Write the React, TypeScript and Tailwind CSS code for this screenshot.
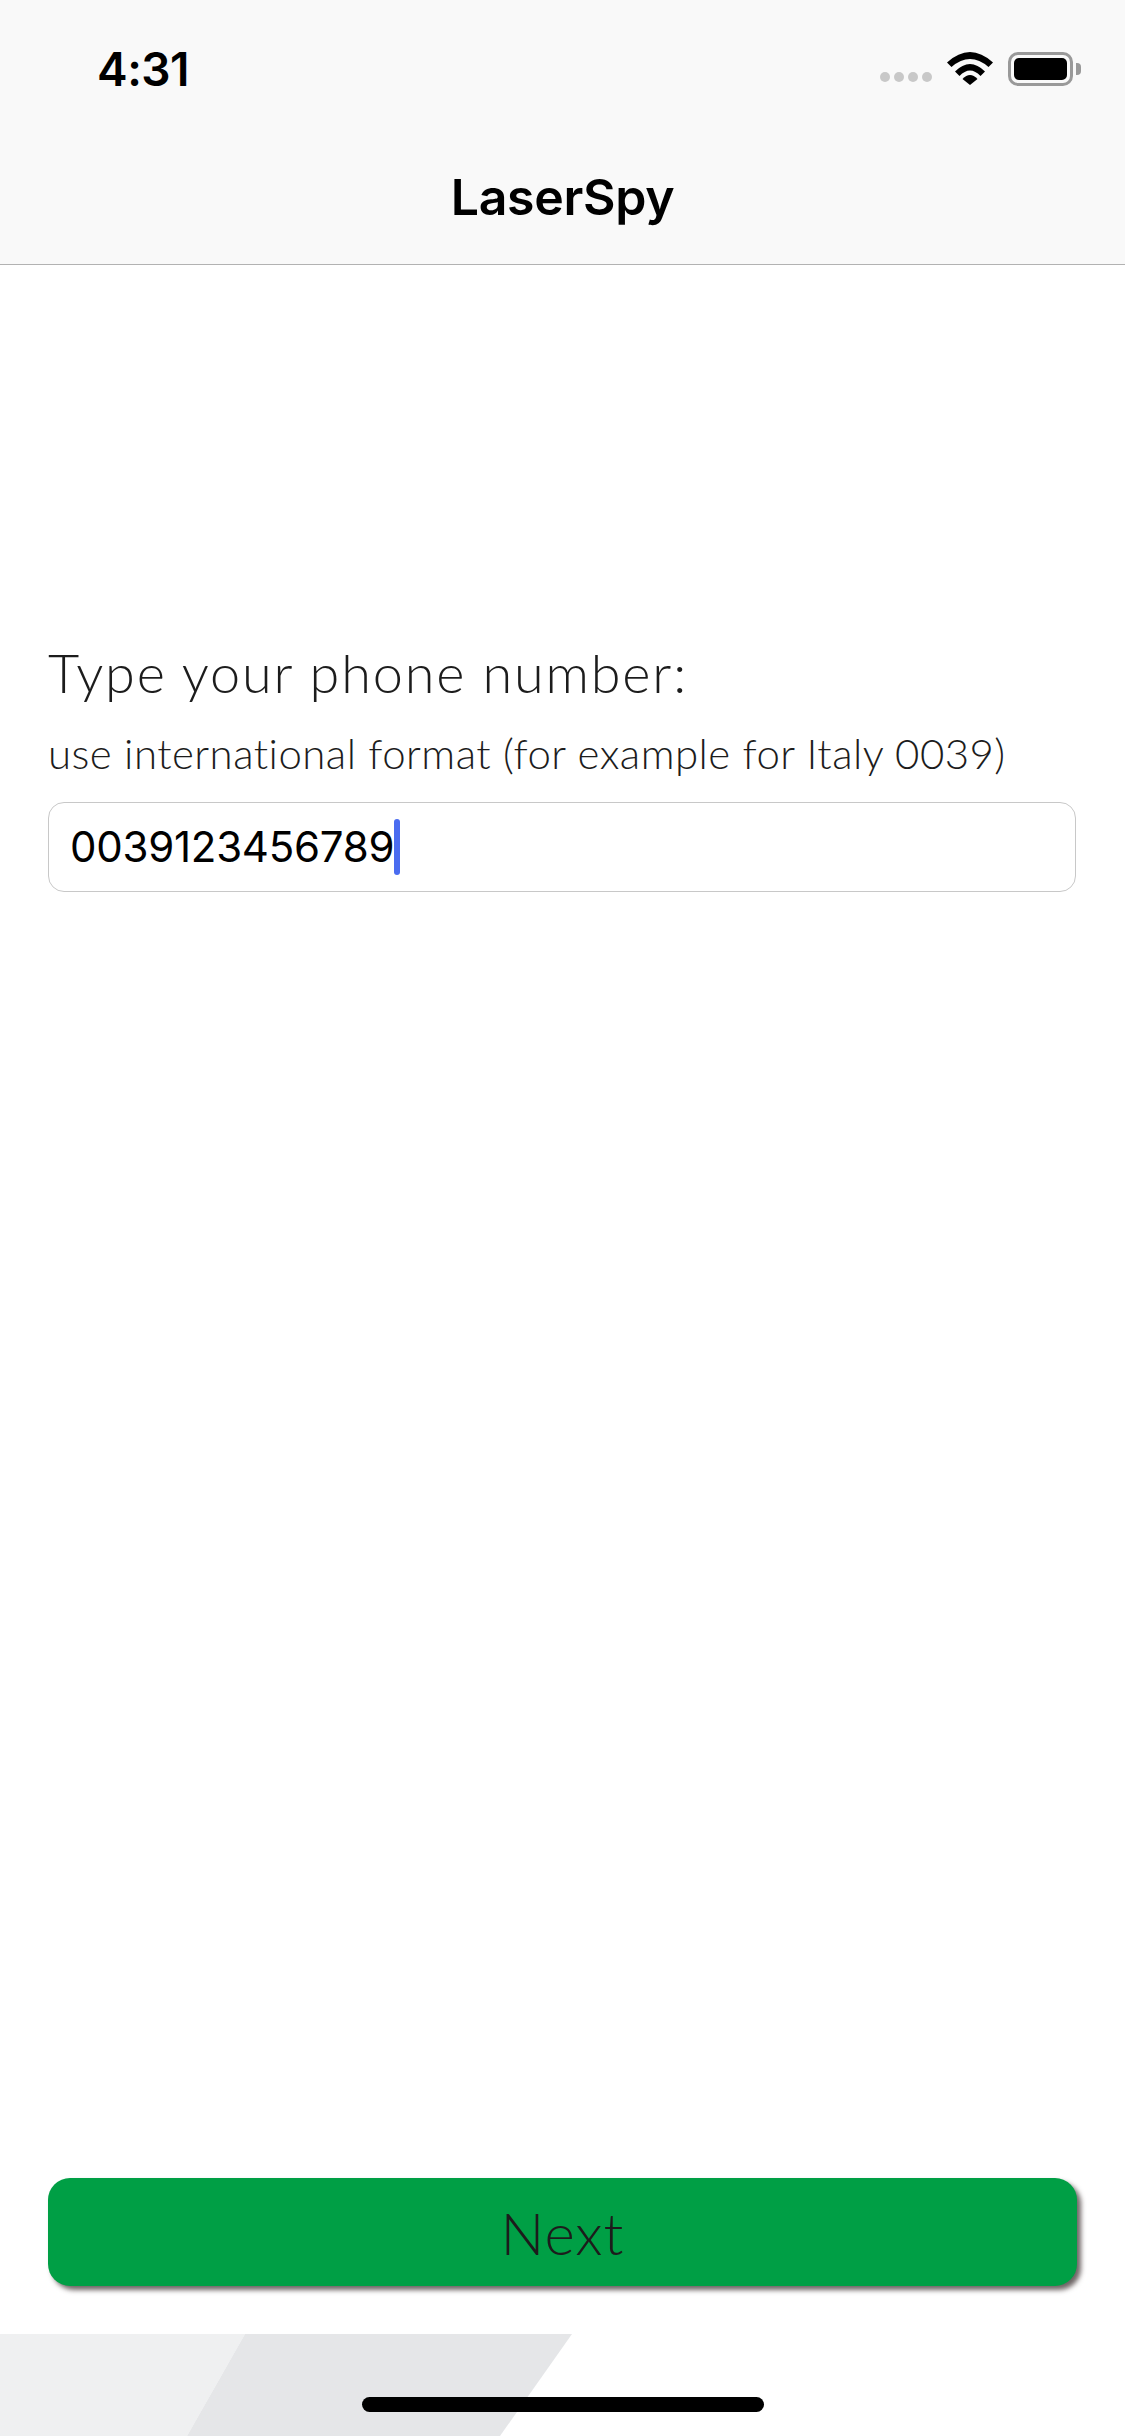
function WifiIcon() {
  return (
    <svg width="46" height="33" viewBox="0 0 46 33" fill="currentColor">
      <path d="M0 10.5 Q23 -10.5 46 10.5 L41.5 15 Q23 -1 4.5 15 Z" />
      <path d="M8 19.5 Q23 4.5 38 19.5 L33.5 24 Q23 13 12.5 24 Z" />
      <path d="M15.5 27 Q23 19 30.5 27 L23 33 Z" />
    </svg>
  );
}

function BatteryIcon() {
  return (
    <div className="flex items-center">
      <div className="h-[34px] w-[65px] rounded-[10px] border-[3px] border-[#999999] p-[3px]">
        <div className="h-full w-full rounded-[5px] bg-black" />
      </div>
      <div className="ml-[3px] h-[12px] w-[5px] rounded-r-[4px] bg-[#999999]" />
    </div>
  );
}

function StatusBar() {
  return (
    <div className="flex h-[162px] items-start justify-between pl-[97px] pr-[44px] pt-[45px]">
      <span className="text-[46px] leading-[48px] font-semibold tracking-[-0.5px] text-black">4:31</span>
      <div className="flex items-center pt-[7px]">
        <div className="mt-[15px] flex gap-[4px]">
          {[0, 1, 2, 3].map((dot) => (
            <div key={dot} className="h-[10px] w-[10px] rounded-full bg-[#c8c8c8]" />
          ))}
        </div>
        <div className="ml-[15px] -mt-[1px] text-black">
          <WifiIcon />
        </div>
        <div className="ml-[15px]">
          <BatteryIcon />
        </div>
      </div>
    </div>
  );
}

export default function App() {
  return (
    <div className="flex h-[2436px] w-[1125px] flex-col overflow-hidden bg-white font-['Inter',sans-serif]">
      <header className="h-[265px] border-b border-[#b2b2b2] bg-[#f9f9f9]">
        <StatusBar />
        <h1 className="text-center text-[50px] leading-[70px] font-semibold tracking-[-0.3px] text-black">LaserSpy</h1>
      </header>

      <main className="flex flex-1 flex-col justify-between px-12 pb-[48px] pt-[373px]">
        <div>
          <p className="font-['Lato',sans-serif] text-[54px] leading-[70px] font-light tracking-[1.8px] text-[#1c1c1c]">
            Type your phone number:
          </p>
          <p className="mt-[20px] font-['Lato',sans-serif] text-[42px] leading-[50px] font-light tracking-[0.46px] text-[#1c1c1c]">
            use international format (for example for Italy 0039)
          </p>
          <div className="mt-[24px] flex h-[90px] w-[1028px] items-center rounded-[16px] border border-[#c8c8c8] pl-[21px]">
            <span className="text-[42px] leading-none tracking-[-0.25px] text-black">0039123456789</span>
            <span className="h-[56px] w-[6px] rounded-full bg-[#4a6cf0]" />
          </div>
        </div>

        <button className="h-[108px] w-[1029px] rounded-[22px] bg-[#009f45] font-['Lato',sans-serif] text-[58px] font-light tracking-[1px] text-[#1c1c1c] shadow-[4px_4px_5px_rgba(60,50,50,0.75)]">
          Next
        </button>
      </main>

      <footer className="relative h-[102px]">
        <svg className="absolute inset-0" width="1125" height="102" viewBox="0 0 1125 102">
          <polygon points="0,0 245,0 187,102 0,102" fill="#eff0f1" />
          <polygon points="245,0 572,0 500,102 187,102" fill="#e5e6e8" />
        </svg>
        <div className="absolute left-[362px] top-[63px] h-[15px] w-[402px] rounded-full bg-black" />
      </footer>
    </div>
  );
}
